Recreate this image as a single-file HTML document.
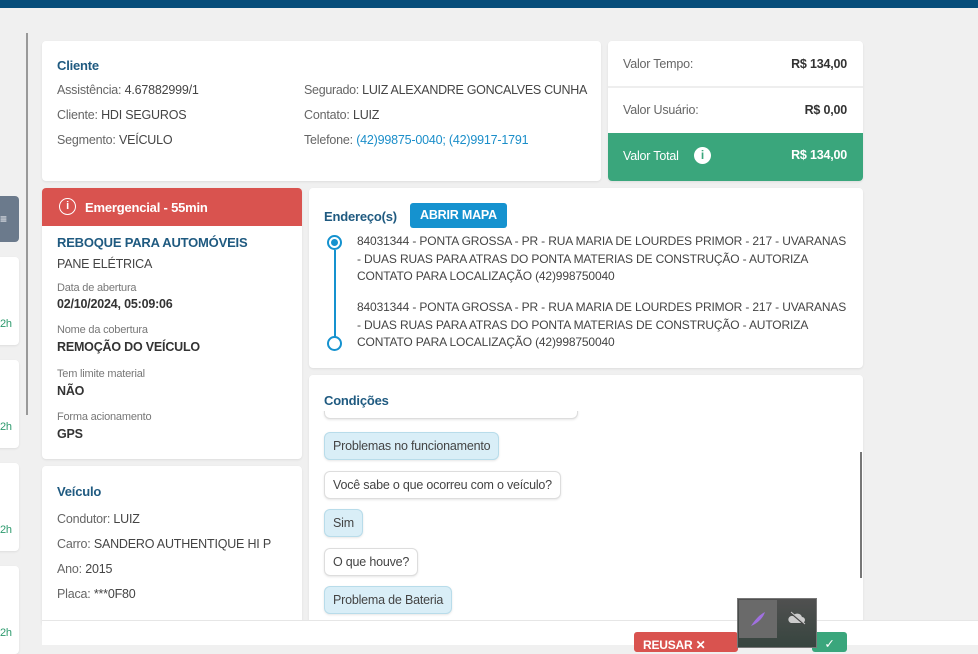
<!DOCTYPE html>
<html><head><meta charset="utf-8"><style>
*{box-sizing:border-box;margin:0;padding:0}
body{width:978px;height:645px;overflow:hidden;background:#f0f0f0;font-family:"Liberation Sans",sans-serif;font-size:12.5px;color:#444;position:relative;letter-spacing:-0.2px}
.a{position:absolute}
.card{position:absolute;background:#fff;border-radius:4px;box-shadow:0 1px 2px rgba(0,0,0,.08)}
.t{color:#1f5a80;font-size:13px;font-weight:bold}
.g{color:#666}
.lbl{font-size:11px;color:#777}
.b{font-weight:bold;color:#333}
.chip{position:absolute;left:15px;border:1px solid #ddd;border-radius:6px;padding:6px 8px;background:#fff;box-shadow:0 1px 2px rgba(0,0,0,.1);color:#444}
.chip.u{background:#d9eef7;border-color:#b8dcea}
.ad{position:absolute;left:48px;white-space:nowrap;font-size:12px;letter-spacing:-0.15px;line-height:17.5px}
</style></head><body>
<div class="a" style="left:0;top:0;width:978px;height:8px;background:#064d7a"></div>
<div class="a" style="left:26px;top:33px;width:2px;height:382px;background:#999"></div>
<div class="a" style="left:0;top:196px;width:19px;height:46px;background:#6b7a8c;border-radius:0 4px 4px 0;color:#fff;font-size:12px;line-height:46px">≡</div>
<div class="card" style="left:-5px;top:257px;width:24px;height:88px"><span class="a" style="left:5px;top:61px;color:#2e9a6e;font-size:11px">2h</span></div>
<div class="card" style="left:-5px;top:360px;width:24px;height:88px"><span class="a" style="left:5px;top:61px;color:#2e9a6e;font-size:11px">2h</span></div>
<div class="card" style="left:-5px;top:463px;width:24px;height:88px"><span class="a" style="left:5px;top:61px;color:#2e9a6e;font-size:11px">2h</span></div>
<div class="card" style="left:-5px;top:566px;width:24px;height:88px"><span class="a" style="left:5px;top:61px;color:#2e9a6e;font-size:11px">2h</span></div>

<div class="card" style="left:42px;top:41px;width:559px;height:140px">
<div class="a t" style="left:15px;top:17px">Cliente</div>
<div class="a g" style="left:15px;top:42px">Assistência: <span style="color:#444">4.67882999/1</span></div>
<div class="a g" style="left:15px;top:67px">Cliente: <span style="color:#444">HDI SEGUROS</span></div>
<div class="a g" style="left:15px;top:92px">Segmento: <span style="color:#444">VEÍCULO</span></div>
<div class="a g" style="left:262px;top:42px;letter-spacing:-0.3px">Segurado: <span style="color:#444">LUIZ ALEXANDRE GONCALVES CUNHA</span></div>
<div class="a g" style="left:262px;top:67px">Contato: <span style="color:#444">LUIZ</span></div>
<div class="a g" style="left:262px;top:92px">Telefone: <span style="color:#1b8ec9">(42)99875-0040; (42)9917-1791</span></div>
</div>

<div class="card" style="left:608px;top:41px;width:255px;height:140px;overflow:hidden">
<div class="a g" style="left:15px;top:16px">Valor Tempo:</div><div class="a b" style="right:16px;top:16px">R$ 134,00</div>
<div class="a" style="left:0;top:45px;width:255px;height:2px;background:#eee"></div>
<div class="a g" style="left:15px;top:62px">Valor Usuário:</div><div class="a b" style="right:16px;top:62px">R$ 0,00</div>
<div class="a" style="left:0;top:92px;width:255px;height:48px;background:#3aa67c;color:#fff">
<span class="a" style="left:15px;top:16px">Valor Total</span>
<span class="a" style="left:86px;top:14px;width:17px;height:17px;border-radius:50%;background:#fff;color:#3aa67c;font-weight:bold;font-size:12px;text-align:center;line-height:17px">i</span>
<span class="a" style="right:16px;top:15px;font-weight:bold">R$ 134,00</span></div>
</div>

<div class="card" style="left:42px;top:188px;width:260px;height:271px;overflow:hidden">
<div class="a" style="left:0;top:0;width:260px;height:38px;background:#d9534f;color:#fff;font-weight:bold;font-size:13px">
<span class="a" style="left:17px;top:10px;width:17px;height:17px;border:1.5px solid #fff;border-radius:50%;font-size:11px;text-align:center;line-height:14px">i</span>
<span class="a" style="left:43px;top:12px">Emergencial - 55min</span></div>
<div class="a t" style="left:15px;top:47px">REBOQUE PARA AUTOMÓVEIS</div>
<div class="a" style="left:15px;top:69px">PANE ELÉTRICA</div>
<div class="a lbl" style="left:15px;top:94px">Data de abertura</div><div class="a b" style="left:15px;top:109px">02/10/2024, 05:09:06</div>
<div class="a lbl" style="left:15px;top:136px">Nome da cobertura</div><div class="a b" style="left:15px;top:152px">REMOÇÃO DO VEÍCULO</div>
<div class="a lbl" style="left:15px;top:180px">Tem limite material</div><div class="a b" style="left:15px;top:196px">NÃO</div>
<div class="a lbl" style="left:15px;top:223px">Forma acionamento</div><div class="a b" style="left:15px;top:239px">GPS</div>
</div>

<div class="card" style="left:42px;top:466px;width:260px;height:160px">
<div class="a t" style="left:15px;top:18px">Veículo</div>
<div class="a g" style="left:15px;top:46px">Condutor: <span style="color:#444">LUIZ</span></div>
<div class="a g" style="left:15px;top:71px">Carro: <span style="color:#444">SANDERO AUTHENTIQUE HI P</span></div>
<div class="a g" style="left:15px;top:96px">Ano: <span style="color:#444">2015</span></div>
<div class="a g" style="left:15px;top:121px">Placa: <span style="color:#444">***0F80</span></div>
</div>

<div class="card" style="left:309px;top:188px;width:554px;height:180px">
<div class="a t" style="left:15px;top:21px">Endereço(s)</div>
<div class="a" style="left:101px;top:15px;width:97px;height:25px;background:#1592cf;color:#fff;font-weight:bold;border-radius:3px;text-align:center;line-height:25px;font-size:12.5px">ABRIR MAPA</div>
<div class="a" style="left:18px;top:47px;width:15px;height:15px;border:2px solid #1592cf;border-radius:50%"><div style="margin:2px;width:7px;height:7px;background:#1592cf;border-radius:50%"></div></div>
<div class="a" style="left:24.5px;top:62px;width:2px;height:87px;background:#1592cf"></div>
<div class="a" style="left:18px;top:148px;width:15px;height:15px;border:2px solid #1592cf;border-radius:50%;background:#fff"></div>
<div class="ad" style="top:45px">84031344 - PONTA GROSSA - PR - RUA MARIA DE LOURDES PRIMOR - 217 - UVARANAS<br>- DUAS RUAS PARA ATRAS DO PONTA MATERIAS DE CONSTRUÇÃO - AUTORIZA<br>CONTATO PARA LOCALIZAÇÃO (42)998750040</div>
<div class="ad" style="top:111px">84031344 - PONTA GROSSA - PR - RUA MARIA DE LOURDES PRIMOR - 217 - UVARANAS<br>- DUAS RUAS PARA ATRAS DO PONTA MATERIAS DE CONSTRUÇÃO - AUTORIZA<br>CONTATO PARA LOCALIZAÇÃO (42)998750040</div>
</div>

<div class="card" style="left:309px;top:375px;width:554px;height:260px;overflow:hidden">
<div class="a t" style="left:15px;top:18px">Condições</div>
<div class="a" style="left:0;top:36px;width:554px;height:220px;overflow:hidden">
<div class="chip" style="top:-20px;width:254px;height:28px"></div>
<div class="chip u" style="top:21px">Problemas no funcionamento</div>
<div class="chip" style="top:60px">Você sabe o que ocorreu com o veículo?</div>
<div class="chip u" style="top:98px">Sim</div>
<div class="chip" style="top:137px">O que houve?</div>
<div class="chip u" style="top:175px">Problema de Bateria</div>
</div>
<div class="a" style="left:551px;top:77px;width:2px;height:126px;background:#777"></div>
</div>

<div class="a" style="left:42px;top:620px;width:936px;height:25px;background:#fff;border-top:1px solid #e6e6e6"></div>
<div class="a" style="left:634px;top:632px;width:104px;height:20px;background:#d9534f;border-radius:3px;color:#fff;font-weight:bold;padding:6px 0 0 9px;font-size:12px">REUSAR ✕</div>
<div class="a" style="left:812px;top:632px;width:35px;height:20px;background:#3aa67c;border-radius:3px;color:#fff;text-align:center;padding-top:4px">✓</div>
<div class="a" style="left:737px;top:598px;width:80px;height:50px;background:linear-gradient(#505050,#37453f);border:1px solid #777">
<div class="a" style="left:1px;top:1px;width:38px;height:38px;background:#6a6a6a"></div>
<svg class="a" style="left:11px;top:11px" width="18" height="18" viewBox="0 0 18 18"><path d="M2 16 C6 10 10 5 16 2 C14 8 9 13 2 16Z" fill="#a070e0"/></svg>
<svg class="a" style="left:50px;top:12px" width="18" height="14" viewBox="0 0 18 14"><path d="M3 12 H14 A3 3 0 0 0 14 6 A5 5 0 0 0 5 5 A3.5 3.5 0 0 0 3 12Z" fill="#ccc"/><path d="M2 1 L16 13" stroke="#444" stroke-width="2"/><path d="M3 1 L17 13" stroke="#ccc" stroke-width="1"/></svg>
</div>
</body></html>
